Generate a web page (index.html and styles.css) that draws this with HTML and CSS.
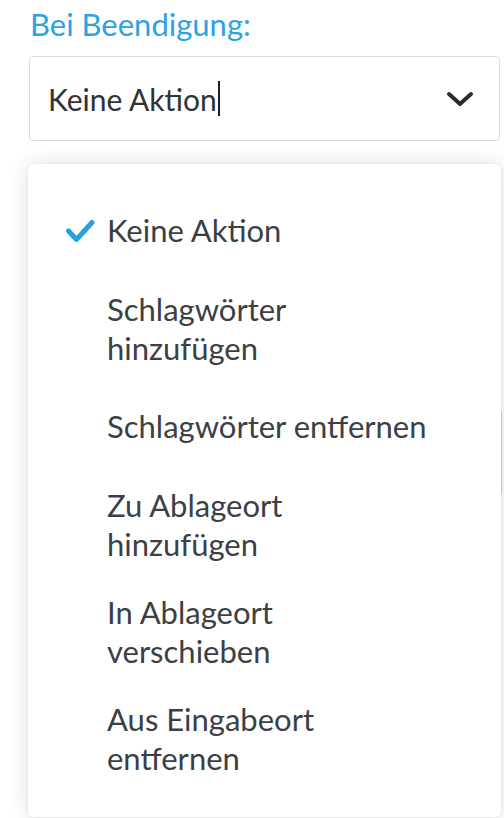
FILE: index.html
```html
<!DOCTYPE html>
<html lang="de">
<head>
<meta charset="utf-8">
<title>Bei Beendigung</title>
<link rel="stylesheet" href="styles.css">
</head>
<body>
<div class="page">
  <div class="field">
    <div class="field-label">Bei Beendigung:</div>
    <div class="select">
      <span class="select-value">Keine Aktion</span><span class="text-caret"></span>
      <svg class="chevron" width="28" height="16" viewBox="0 0 28 16" aria-hidden="true">
        <polyline points="3,3 14,13 25,3" fill="none" stroke="#2b2b2b" stroke-width="4" stroke-linecap="round" stroke-linejoin="round"/>
      </svg>
    </div>
  </div>
  <div class="field-box"></div>
  <div class="hint">Automatisch Schlagwörter zuweisen</div>

  <div class="menu">
    <div class="menu-item is-selected">
      <svg class="check" width="30" height="24" viewBox="0 0 30 24" aria-hidden="true">
        <polyline points="3.5,12 11.5,20.5 27,3.5" fill="none" stroke="#2a9fdf" stroke-width="5" stroke-linecap="round" stroke-linejoin="round"/>
      </svg>
      <span class="menu-text">Keine Aktion</span>
    </div>
    <div class="menu-item"><span class="menu-text">Schlagwörter hinzufügen</span></div>
    <div class="menu-item"><span class="menu-text">Schlagwörter entfernen</span></div>
    <div class="menu-item"><span class="menu-text">Zu Ablageort hinzufügen</span></div>
    <div class="menu-item"><span class="menu-text">In Ablageort verschieben</span></div>
    <div class="menu-item"><span class="menu-text">Aus Eingabeort entfernen</span></div>
  </div>
</div>
</body>
</html>
```

FILE: styles.css
```css
html, body {
  margin: 0;
  padding: 0;
  background: #ffffff;
  overflow: hidden;
}

body {
  font-family: Lato, "Open Sans", "Liberation Sans", sans-serif;
  color: #3c4045;
}

.page {
  position: relative;
  height: 818px;
  padding: 7px 4px 0 29px;
  box-sizing: border-box;
}

.field-label {
  font-size: 31px;
  line-height: 34px;
  color: #2ba3e3;
  padding-left: 1px;
}

.select {
  margin-top: 15px;
  height: 85px;
  box-sizing: border-box;
  border: 1px solid #dcdcdc;
  border-radius: 4px;
  display: flex;
  align-items: center;
  padding: 0 25px 0 18px;
  font-size: 30px;
  color: #2f3236;
}

.text-caret {
  display: inline-block;
  width: 2px;
  height: 35px;
  background: #1f1f1f;
  margin-left: 1px;
}

.chevron {
  margin-left: auto;
  display: block;
}

.field-box {
  margin-top: 269px;
  margin-right: -2px;
  height: 87px;
  box-sizing: border-box;
  border: 1px solid #d6d6d6;
  border-radius: 4px;
}

.hint {
  margin-top: 316px;
  padding-left: 19px;
  font-size: 28px;
  line-height: 34px;
  white-space: nowrap;
  color: #3c4045;
}

.menu {
  position: absolute;
  left: 28px;
  top: 164px;
  width: 473px;
  box-sizing: border-box;
  padding: 22px 0 25px;
  background: #ffffff;
  border-radius: 6px;
  box-shadow: 0 0 22px rgba(0, 0, 0, 0.13), 0 1px 4px rgba(0, 0, 0, 0.06);
}

.menu-item {
  display: grid;
  grid-template-columns: 30px 1fr;
  column-gap: 12px;
  align-items: center;
  min-height: 89px;
  box-sizing: border-box;
  padding: 15px 20px 15px 37px;
}

.check {
  grid-column: 1;
  display: block;
}

.menu-text {
  grid-column: 2;
  font-size: 31px;
  line-height: 38.5px;
  max-width: 328px;
  color: #3c4045;
}
```
